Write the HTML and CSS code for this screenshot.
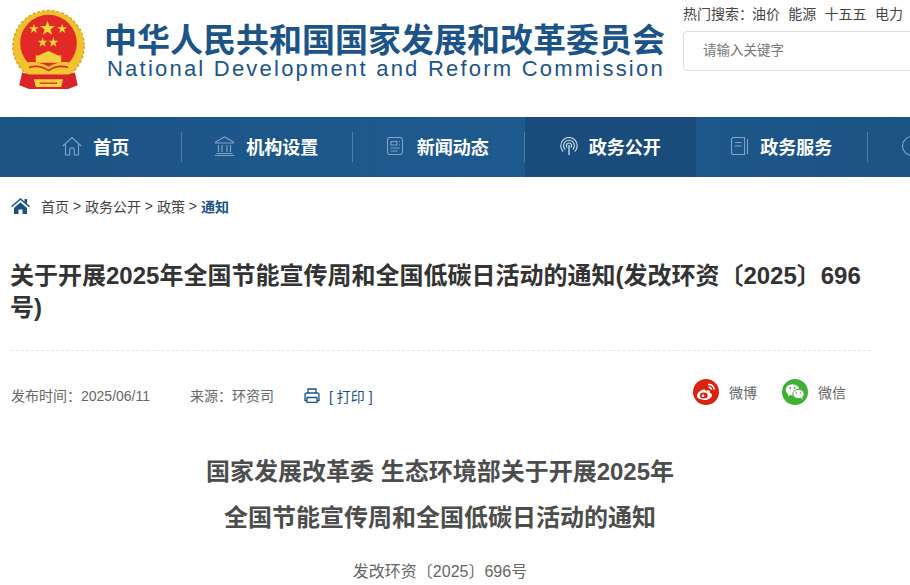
FILE: index.html
```html
<!DOCTYPE html>
<html lang="zh-CN">
<head>
    <meta charset="UTF-8">
    <meta name="viewport" content="width=device-width, initial-scale=1.0">
    <title>关于开展2025年全国节能宣传周和全国低碳日活动的通知</title>
    <link rel="stylesheet" href="styles.css">
</head>
<body>
    <header class="site-header">
        <a class="logo" href="#">
            <svg class="emblem" width="76" height="84" viewBox="0 0 76 84">
                <circle cx="38" cy="38" r="36.5" fill="#f0c12e"/>
                <circle cx="38" cy="38" r="36.5" fill="none" stroke="#dfa21f" stroke-width="1.5" stroke-dasharray="3 2"/>
                <circle cx="38" cy="35" r="29" fill="#e12a26"/>
                <polygon fill="#f8d63c" points="37,12 38.900,17.400 44.600,17.500 40,21 41.700,26.500 37,23.200 32.300,26.500 34,21 29.400,17.500 35.100,17.400"/>
                <polygon fill="#f8d63c" points="23,15 24.200,18.600 28,18.600 25,20.900 26.100,24.600 23,22.300 19.900,24.600 21,20.900 18,18.600 21.800,18.600"/>
                <polygon fill="#f8d63c" points="52,15 53.200,18.600 57,18.600 54,20.900 55.100,24.600 52,22.300 48.900,24.600 50,20.900 47,18.600 50.800,18.600"/>
                <polygon fill="#f8d63c" points="32,29 33.200,32.600 37,32.600 34,34.900 35.100,38.600 32,36.300 28.900,38.600 30,34.900 27,32.600 30.800,32.600"/>
                <polygon fill="#f8d63c" points="43,29 44.200,32.600 48,32.600 45,34.900 46.100,38.600 43,36.300 39.900,38.600 41,34.900 38,32.600 41.800,32.600"/>
                <path fill="#f6cf3a" d="M27 48h22l2-1v8H25v-8zM38 43l-11 5h22z"/>
                <path fill="#f3c630" d="M14 56c6-3 14-2 24 3 10-5 18-6 24-3l2 4-6 6H18l-6-6z"/>
                <path fill="none" stroke="#e12a26" stroke-width="1.600" d="M18 60c6-2 14-1 20 3 6-4 14-5 20-3"/>
                <path fill="#d8252b" d="M11 65l7 2h40l7-2 3 13-10 4H18l-10-4z"/>
                <path fill="#f6cf3a" d="M23 72h30l-2 8H25z"/>
                <path fill="none" stroke="#e12a26" stroke-width="1.400" d="M29 76h18"/>
            </svg>
            <div class="logo-text">
                <div class="logo-cn">中华人民共和国国家发展和改革委员会</div>
                <div class="logo-en">National Development and Reform Commission</div>
            </div>
        </a>
        <div class="search-area">
            <div class="hot-words">
                <span class="hot-label">热门搜索：</span><a href="#">油价</a><a href="#">能源</a><a href="#">十五五</a><a href="#">电力</a>
            </div>
            <input class="search-input" type="text" placeholder="请输入关键字">
        </div>
    </header>

    <nav class="main-nav">
        <a class="nav-item" href="#">
            <svg class="nav-icon" width="20" height="20" viewBox="0 0 20 20"><path d="M.8 10 10 1.500 19.200 10M3.500 8.500V19h4.200v-5a2.300 2.300 0 0 1 4.600 0v5h4.200V8.500"/></svg>
            首页
        </a>
        <a class="nav-item shift" href="#">
            <svg class="nav-icon" width="21" height="20" viewBox="0 0 21 20"><path d="M10.500 1 1.500 6v1h18V6zM1 19.500h19M2.500 17.500h16M4.500 9v7M8 9v7M13 9v7M16.500 9v7"/></svg>
            机构设置
        </a>
        <a class="nav-item news shift" href="#">
            <svg class="nav-icon" width="16" height="18" viewBox="0 0 16 18"><rect x=".5" y=".5" width="15" height="17" rx="2.500"/><path d="M4 4.500h6v3.500H4zM12 4.500h1M12 8h1M3.500 11h9M3.500 14h7"/></svg>
            新闻动态
        </a>
        <a class="nav-item active" href="#">
            <svg class="nav-icon" width="18" height="18" viewBox="0 0 18 18"><path d="M3.200 14.500a8.200 8.200 0 1 1 11.600 0M5.200 12.500a5.400 5.400 0 1 1 7.600 0M7.200 10.500a2.600 2.600 0 1 1 3.600 0"/><path class="mast" d="M9 8v10"/></svg>
            政务公开
        </a>
        <a class="nav-item" href="#">
            <svg class="nav-icon" width="18" height="18" viewBox="0 0 18 18"><path d="M13.500.5h-11a2 2 0 0 0-2 2v13a2 2 0 0 0 2 2h11zM4 5.500h6.500M4 9h6.500M16.500 2v15"/></svg>
            政务服务
        </a>
        <a class="nav-item last" href="#">
            <svg class="nav-icon" width="20" height="20" viewBox="0 0 20 20"><circle cx="10" cy="10" r="9.500"/></svg>
        </a>
    </nav>

    <div class="breadcrumb">
        <svg class="crumb-home" width="19" height="16" viewBox="0 0 19 16"><path d="M9.500 0 0 8.200l1 1.100L9.500 2l8.500 7.300 1-1.100-3-2.600V1h-2.500v2.400zM3 10v6h4.500v-4.500h4V16H16v-6L9.500 4.300z"/></svg>
        <a href="#">首页</a> &gt; <a href="#">政务公开</a> &gt; <a href="#">政策</a> &gt; <a class="current" href="#">通知</a>
    </div>

    <main class="article">
        <h1 class="article-heading">关于开展2025年全国节能宣传周和全国低碳日活动的通知(发改环资〔2025〕696号)</h1>
        <div class="meta">
            <span class="meta-date">发布时间：2025/06/11</span>
            <span class="meta-source">来源：环资司</span>
            <a class="print" href="#">
                <svg width="16" height="15" viewBox="0 0 16 15"><path class="print-line" d="M4 5V1h8v4M3.500 12.500H1V7a2 2 0 0 1 2-2h10a2 2 0 0 1 2 2v5.500h-2.500"/><path class="print-fill" d="M3 9.500h10V14.500H3z"/></svg>
                [ 打印 ]
            </a>
            <div class="share">
                <a class="share-item" href="#">
                    <span class="share-icon weibo">
                        <svg width="20" height="18" viewBox="0 0 20 18"><path fill="#fff" d="M8 6.500c-3.500.6-7 3.500-7 6.300C1 15.200 4 17 8 17c4.500 0 8-2.300 8-4.800 0-1.500-1.500-2.200-2.300-2.400.5-1.300.1-2.500-1.800-2.500-.9 0-1.900.3-2.500.6-.2-1.400-.6-1.700-1.400-1.400z"/><ellipse cx="7.800" cy="12.500" rx="3.900" ry="3" fill="#d9230f"/><circle cx="7" cy="12.700" r="1.300" fill="#fff"/><path fill="none" stroke="#fff" stroke-width="1.500" d="M12 1.500c3-.6 6 1.500 6 5M12.500 4.300c1.500-.3 3 .8 3 2.400"/></svg>
                    </span>
                    微博
                </a>
                <a class="share-item" href="#">
                    <span class="share-icon wechat">
                        <svg width="20" height="18" viewBox="0 0 20 18"><ellipse cx="7.500" cy="6.800" rx="6.800" ry="5.600" fill="#fff"/><path fill="#fff" d="M3.500 10.500 3 13.500l3-2z"/><ellipse cx="13.500" cy="11" rx="5.700" ry="4.700" stroke="#3fb034" fill="#fff"/><path fill="#fff" d="M16 14.500l1.500 2.500-.2-3z"/><circle cx="5.300" cy="5" r=".9" fill="#3fb034"/><circle cx="9.500" cy="5" r=".9" fill="#3fb034"/><circle cx="11.500" cy="10" r=".8" fill="#3fb034"/><circle cx="15.500" cy="10" r=".8" fill="#3fb034"/></svg>
                    </span>
                    微信
                </a>
            </div>
        </div>
        <div class="article-body">
            <h2 class="doc-title">国家发展改革委 生态环境部关于开展2025年<br>全国节能宣传周和全国低碳日活动的通知</h2>
            <p class="doc-number">发改环资〔2025〕696号</p>
        </div>
    </main>
</body>
</html>
```

FILE: styles.css
```css
* {
    margin: 0;
    padding: 0;
    box-sizing: border-box;
}

html, body {
    height: 585px;
    overflow: hidden;
}

body {
    width: 910px;
    background-color: white;
    color: #333;
    font-family: "Liberation Sans", "Noto Sans CJK SC", sans-serif;
}

a {
    color: inherit;
    text-decoration: none;
}

.site-header {
    display: flex;
    height: 117px;
    padding-left: 11px;
}

.logo {
    flex: none;
    display: flex;
    width: 672px;
    padding-top: 9px;
    gap: 18px;
}

.emblem {
    width: 75px;
    height: 82px;
}

.logo-text {
    padding-top: 13px;
    color: #1c5488;
}

.logo-cn {
    font-size: 33px;
    font-weight: 700;
    line-height: 38px;
    white-space: nowrap;
}

.logo-en {
    padding-left: 3px;
    font-size: 22px;
    line-height: 18px;
    white-space: nowrap;
    letter-spacing: 2.220px;
}

.search-area {
    flex: none;
    width: 260px;
    padding-top: 5px;
}

.hot-words {
    font-size: 14px;
    line-height: 18px;
    color: #444;
    white-space: nowrap;
}

.hot-label {
    margin-right: -1px;
}

.hot-words a {
    margin-right: 8.300px;
}

.search-input {
    display: block;
    width: 260px;
    height: 40px;
    margin-top: 8px;
    padding-left: 19px;
    padding-bottom: 2px;
    border: 1px solid #ddd;
    border-radius: 4px;
    outline: none;
    font-family: inherit;
    font-size: 13.500px;
}

.search-input::placeholder {
    color: #777;
}

.main-nav {
    display: flex;
    height: 60px;
    padding-left: 10px;
    overflow: hidden;
    background: linear-gradient(to right, #1c5385, #1f5a8e 55%, #1c5385);
}

.nav-item {
    flex: none;
    position: relative;
    display: flex;
    align-items: center;
    justify-content: center;
    width: 171.500px;
    padding-bottom: 3px;
    gap: 11px;
    color: white;
    font-size: 18px;
    font-weight: 700;
    white-space: nowrap;
}

.nav-item::after {
    content: "";
    position: absolute;
    top: 15px;
    right: 0;
    width: 1px;
    height: 30px;
    background-color: #4f7ea8;
}

.nav-item.shift {
    padding-right: 2px;
}

.nav-item.news {
    gap: 14px;
}

.nav-item.active {
    background-color: #194c7a;
}

.nav-item.active::after {
    display: none;
}

.nav-item.last {
    justify-content: flex-start;
    padding-left: 34px;
}

.nav-icon {
    fill: none;
    stroke: #7ea6cb;
    stroke-width: 1.100;
}

.nav-item.active .nav-icon {
    stroke: #d5e6f5;
}

.nav-item.active .mast {
    stroke: #8cc0ee;
    stroke-width: 1.800;
}

.breadcrumb {
    display: flex;
    align-items: center;
    height: 60px;
    padding-left: 11px;
    padding-bottom: 3px;
    font-size: 14px;
    color: #444;
    white-space: pre;
}

.crumb-home {
    margin-right: 11px;
    fill: #1c5385;
}

.current {
    color: #1c5385;
    font-weight: 700;
}

.article {
    padding: 23px 39px 0 11px;
}

.article-heading {
    height: 90px;
    margin-left: -1px;
    font-size: 24px;
    line-height: 32px;
    color: #333;
}

.meta {
    display: flex;
    align-items: center;
    height: 99px;
    padding-bottom: 11px;
    padding-right: 25px;
    border-top: 1px dashed #e6e6e6;
    font-size: 14px;
    color: #666;
}

.meta-date {
    width: 179px;
}

.meta-source {
    width: 114px;
}

.print {
    display: flex;
    align-items: center;
    margin-top: 2px;
    gap: 9px;
    color: #1c5385;
}

.print svg {
    fill: none;
    stroke: #1c5385;
    stroke-width: 1.300;
}

.print-fill {
    fill: white;
}

.share {
    display: flex;
    margin-left: auto;
    margin-bottom: 6px;
    gap: 25px;
}

.share-item {
    display: flex;
    align-items: center;
    gap: 10px;
}

.share-icon {
    display: flex;
    align-items: center;
    justify-content: center;
    width: 26px;
    height: 26px;
    border-radius: 50%;
}

.weibo {
    background-color: #d9230f;
}

.wechat {
    background-color: #3fb034;
}

.article-body {
    margin-right: 2px;
    text-align: center;
    color: #4d4d4d;
}

.doc-title {
    font-size: 24px;
    line-height: 46px;
}

.doc-number {
    margin-top: 19px;
    font-size: 16px;
    line-height: 24px;
    color: #666;
}
```
